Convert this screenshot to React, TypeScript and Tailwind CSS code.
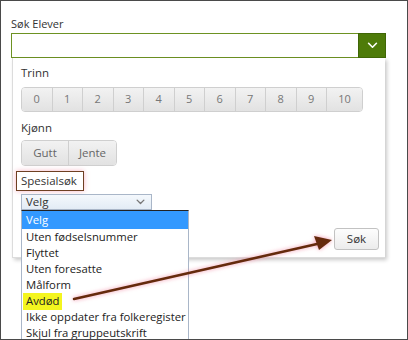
const trinn = ["0", "1", "2", "3", "4", "5", "6", "7", "8", "9", "10"];

const options = [
  "Velg",
  "Uten fødselsnummer",
  "Flyttet",
  "Uten foresatte",
  "Målform",
  "Avdød",
  "Ikke oppdater fra folkeregister",
  "Skjul fra gruppeutskrift",
];

function Chevron({ className }: { className: string }) {
  return (
    <svg className={className} viewBox="0 0 12 8" fill="none" stroke="currentColor" strokeWidth={1.8}>
      <path strokeLinecap="round" strokeLinejoin="round" d="M1.5 1.5 6 6l4.5-4.5" />
    </svg>
  );
}

export default function App() {
  return (
    <div
      className="relative w-[408px] h-[340px] overflow-hidden bg-white border border-[#4a4a4a] text-[11px] text-[#333]"
      style={{ fontFamily: '"Open Sans", "Liberation Sans", sans-serif' }}
    >
      <div className="pl-[10px] pt-[15px] pr-[21px]">
        <p className="leading-[16px]">Søk Elever</p>

        {/* Søkefelt */}
        <div className="mt-[1px] flex h-[25px] border border-[#6d9222]">
          <div className="flex-1 bg-white" />
          <div className="w-[28px] -my-[1px] -mr-[1px] bg-[#4e7b09] border border-[#3f6606] flex items-center justify-center text-white">
            <Chevron className="w-[11px] h-[7px]" />
          </div>
        </div>

        {/* Filterpanel */}
        <div className="ml-[1px] mr-[1px] h-[200px] bg-white border-l border-b border-[#dcdcdc] shadow-[2px_2px_4px_rgba(0,0,0,0.22)] pl-[8px] pt-[7px]">
          <p className="leading-[16px] text-[11.5px]">Trinn</p>
          <div className="mt-[6px] flex h-[25px] w-[342px] rounded-[4px] border border-[#cfcfcf] overflow-hidden">
            {trinn.map((t, i) => (
              <div
                key={t}
                className={`flex items-center justify-center bg-gradient-to-b from-[#f2f2f2] to-[#e2e2e2] text-[#777] ${
                  i === trinn.length - 1 ? "flex-1" : "w-[30.5px] border-r border-[#cfcfcf]"
                }`}
              >
                {t}
              </div>
            ))}
          </div>

          <p className="mt-[8px] leading-[16px] text-[11.5px]">Kjønn</p>
          <div className="mt-[4px] flex h-[26px] w-[96px] rounded-[4px] border border-[#cfcfcf] overflow-hidden text-[11.5px]">
            <div className="w-[47px] flex items-center justify-center border-r border-[#cfcfcf] bg-gradient-to-b from-[#f2f2f2] to-[#e2e2e2] text-[#666]">
              Gutt
            </div>
            <div className="flex-1 flex items-center justify-center bg-gradient-to-b from-[#f2f2f2] to-[#e2e2e2] text-[#666]">
              Jente
            </div>
          </div>

          <div className="mt-[5px] -ml-[5px] inline-block h-[20px] border-[1.5px] border-[#6e3f22] pl-[4px] pr-[6px] leading-[17px] text-[11.5px] shadow-[0_0_5px_rgba(240,120,150,0.55)]">
            Spesialsøk
          </div>

          <div className="relative mt-[3px] w-[131px] h-[16px] border border-[#a9b6c8] bg-gradient-to-b from-[#f4f8fc] to-[#e3ecf5] flex items-center justify-between pl-[4px] pr-[6px] leading-[14px] text-[11.5px]">
            <span>Velg</span>
            <Chevron className="w-[9px] h-[6px] text-[#777]" />

            {/* Åpen nedtrekksliste */}
            <div className="absolute left-[-1px] top-[15px] z-10 w-[168px] bg-white border border-[#a9b6c8] border-t-[#222] pb-[10px] text-[11.3px]">
              {options.map((o, i) => (
                <div
                  key={o}
                  className={`pl-[4px] whitespace-nowrap ${
                    i === 0 ? "h-[18px] leading-[18px] bg-[#3399ff] text-white" : "h-[16px] leading-[16px] text-[#222]"
                  }`}
                >
                  {o === "Avdød" ? (
                    <span className="-ml-[3px] pl-[3px] pr-[3px] inline-block h-[17px] bg-[#f4f51f]">{o}</span>
                  ) : (
                    o
                  )}
                </div>
              ))}
            </div>
          </div>

          <div className="mt-[18px] flex justify-end pr-[6px]">
            <button className="w-[45px] h-[22px] rounded-[3px] border border-[#c2c2c2] bg-gradient-to-b from-[#fdfdfd] to-[#ececec] text-[#333] text-[11.5px] leading-[20px]">
              Søk
            </button>
          </div>
        </div>
      </div>

      {/* Pil */}
      <svg className="absolute left-0 top-0 z-20 pointer-events-none" width="408" height="340" viewBox="0 0 408 340">
        <g style={{ filter: "drop-shadow(0 0 2px rgba(240,120,150,0.8))" }}>
          <line x1="73" y1="298" x2="316" y2="243" stroke="#652a0c" strokeWidth="2.5" strokeLinecap="round" />
          <path d="M331 239 L313 235 L318 249 Z" fill="#652a0c" />
        </g>
      </svg>
    </div>
  );
}
